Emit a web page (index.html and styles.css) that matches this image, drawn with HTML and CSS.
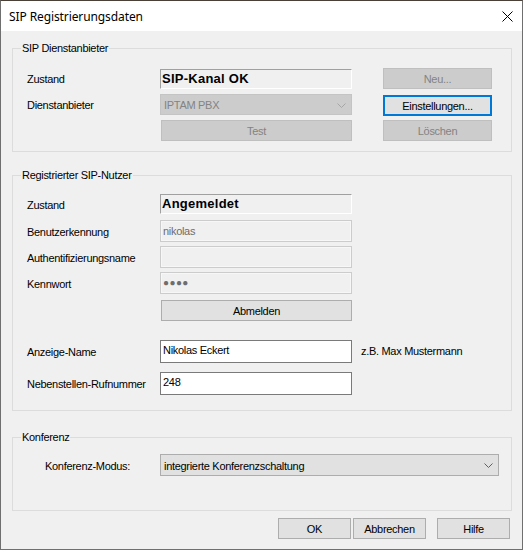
FILE: index.html
```html
<!DOCTYPE html>
<html lang="de">
<head>
<meta charset="utf-8">
<title>SIP Registrierungsdaten</title>
<link rel="stylesheet" href="styles.css">
</head>
<body>
<div class="window">
  <div class="titlebar">
    <span class="title">SIP Registrierungsdaten</span>
    <svg class="close" width="11" height="11" viewBox="0 0 11 11"><path d="M0.5 0.5 L10.5 10.5 M10.5 0.5 L0.5 10.5" stroke="#000" stroke-width="1" fill="none"/></svg>
  </div>
  <div class="content">
    <div class="group g1">
      <span class="legend">SIP Dienstanbieter</span>
      <div class="grid1">
        <span class="label">Zustand</span>
        <div class="status s1">SIP-Kanal OK</div>
        <span></span>
        <div class="btn disabled">Neu...</div>

        <span class="label">Dienstanbieter</span>
        <div class="combo disabled"><span>IPTAM PBX</span>
          <svg class="chev" width="9" height="5" viewBox="0 0 9 5"><path d="M0.5 0.5 L4.5 4.5 L8.5 0.5" stroke="#a6a6a6" fill="none"/></svg>
        </div>
        <span></span>
        <div class="btn default">Einstellungen...</div>

        <span></span>
        <div class="btn disabled test">Test</div>
        <span></span>
        <div class="btn disabled">Löschen</div>
      </div>
    </div>

    <div class="group g2">
      <span class="legend">Registrierter SIP-Nutzer</span>
      <div class="row r-zustand">
        <span class="label">Zustand</span>
        <div class="status s2">Angemeldet</div>
      </div>
      <div class="row r-field r-first">
        <span class="label">Benutzerkennung</span>
        <div class="ro">nikolas</div>
      </div>
      <div class="row r-field">
        <span class="label">Authentifizierungsname</span>
        <div class="ro"></div>
      </div>
      <div class="row r-field">
        <span class="label">Kennwort</span>
        <div class="ro dots">●●●●</div>
      </div>
      <div class="row r-btn">
        <span></span>
        <div class="btn abmelden">Abmelden</div>
      </div>
      <div class="row r-input r-anzeige">
        <span class="label">Anzeige-Name</span>
        <div class="input">Nikolas Eckert</div>
        <span class="hint">z.B. Max Mustermann</span>
      </div>
      <div class="row r-input r-neben">
        <span class="label">Nebenstellen-Rufnummer</span>
        <div class="input">248</div>
      </div>
    </div>

    <div class="group g3">
      <span class="legend">Konferenz</span>
      <div class="row3">
        <span class="label">Konferenz-Modus:</span>
        <div class="combo enabled"><span>integrierte Konferenzschaltung</span>
          <svg class="chev" width="9" height="5" viewBox="0 0 9 5"><path d="M0.5 0.5 L4.5 4.5 L8.5 0.5" stroke="#606060" fill="none"/></svg>
        </div>
      </div>
    </div>

    <div class="actions">
      <div class="btn act">OK</div>
      <div class="btn act">Abbrechen</div>
      <div class="btn act hilfe">Hilfe</div>
    </div>
  </div>
</div>
</body>
</html>
```
FILE: styles.css
```css
html, body {
  margin: 0;
  padding: 0;
  background: #3a3530;
}
.window {
  width: 523px;
  height: 550px;
  box-sizing: border-box;
  border: 1px solid #6f6f6f;
  border-top-color: #4a4038;
  background: #f0f0f0;
  font-family: "Liberation Sans", Arial, sans-serif;
  font-size: 11px;
  letter-spacing: -0.3px;
  color: #000;
}
.titlebar {
  height: 30px;
  background: #fff;
  display: flex;
  align-items: center;
  justify-content: space-between;
  padding: 0 9px 0 8px;
}
.title {
  font-family: "Noto Sans", "Open Sans", sans-serif;
  font-size: 12px;
  letter-spacing: -0.1px;
  margin-top: 1px;
}
.close {
  display: block;
}
.content {
  padding: 17px 10px 0 11px;
}
.group {
  position: relative;
  border: 1px solid #dcdcdc;
  box-sizing: border-box;
}
.legend {
  position: absolute;
  top: -7px;
  left: 8px;
  padding: 0 1px;
  background: #f0f0f0;
  line-height: 13px;
}
.g1 {
  height: 104px;
  padding: 19px 0 0 14px;
}
.grid1 {
  display: grid;
  grid-template-columns: 133px 192px 31px 109px;
  grid-template-rows: 21px 21px 21px;
  row-gap: 5px;
}
.label {
  align-self: center;
  line-height: 13px;
  margin-top: 2px;
}
.status {
  box-sizing: border-box;
  border: 1px solid #fff;
  border-top-color: #a0a0a0;
  border-left-color: #a0a0a0;
  font-weight: bold;
  font-size: 13px;
  letter-spacing: 0.25px;
  line-height: 17px;
  padding-left: 1px;
}
.s1 {
  height: 20px;
  margin-top: 1px;
}
.s2 {
  height: 20px;
}
.btn {
  box-sizing: border-box;
  border: 1px solid #adadad;
  background: #e1e1e1;
  display: flex;
  align-items: center;
  justify-content: center;
  line-height: 13px;
  padding-top: 1px;
}
.btn.disabled {
  background: #cccccc;
  border-color: #bfbfbf;
  color: #838383;
}
.btn.default {
  border: 2px solid #0078d7;
  height: 21px;
  margin-top: 1px;
}
.btn.test {
  margin-left: 1px;
}
.combo {
  box-sizing: border-box;
  display: flex;
  align-items: center;
  justify-content: space-between;
  padding: 1px 5px 0 3px;
}
.combo.disabled {
  background: #cccccc;
  border: 1px solid #c4c4c4;
  color: #838383;
  height: 21px;
}
.combo.enabled {
  background: #e1e1e1;
  border: 1px solid #adadad;
  height: 22px;
  padding-right: 5px;
}
.chev {
  display: block;
}
.g2 {
  margin-top: 23px;
  height: 236px;
  padding: 18px 0 0 14px;
}
.row {
  display: grid;
  grid-template-columns: 133px 192px auto;
}
.r-zustand {
  height: 20px;
}
.r-field {
  height: 22px;
  margin-top: 4px;
}
.r-first {
  margin-top: 6px;
}
.ro {
  box-sizing: border-box;
  border: 1px solid #cccccc;
  box-shadow: inset 0 0 0 1px #f7f7f7;
  background: #f0f0f0;
  color: #6d6d6d;
  padding-left: 2px;
  line-height: 20px;
}
.dots {
  font-size: 10px;
  letter-spacing: 0.4px;
  color: #6d6d6d;
  line-height: 20px;
}
.r-btn {
  height: 21px;
  margin-top: 6px;
}
.abmelden {
  margin-left: 1px;
  width: 191px;
}
.r-input {
  height: 23px;
}
.r-anzeige {
  margin-top: 19px;
}
.r-neben {
  margin-top: 9px;
}
.input {
  box-sizing: border-box;
  border: 1px solid #7a7a7a;
  background: #fff;
  padding-left: 2px;
  line-height: 18px;
}
.hint {
  align-self: center;
  padding-left: 9px;
  line-height: 13px;
}
.g3 {
  margin-top: 26px;
  height: 74px;
  padding: 16px 0 0 32px;
}
.row3 {
  display: grid;
  grid-template-columns: 115px 339px;
  height: 22px;
}
.actions {
  display: flex;
  justify-content: flex-end;
  margin-top: 7px;
  margin-right: 2px;
}
.btn.act {
  width: 73px;
  height: 21px;
  margin-left: 2px;
}
.btn.hilfe {
  margin-left: 11px;
}
```
